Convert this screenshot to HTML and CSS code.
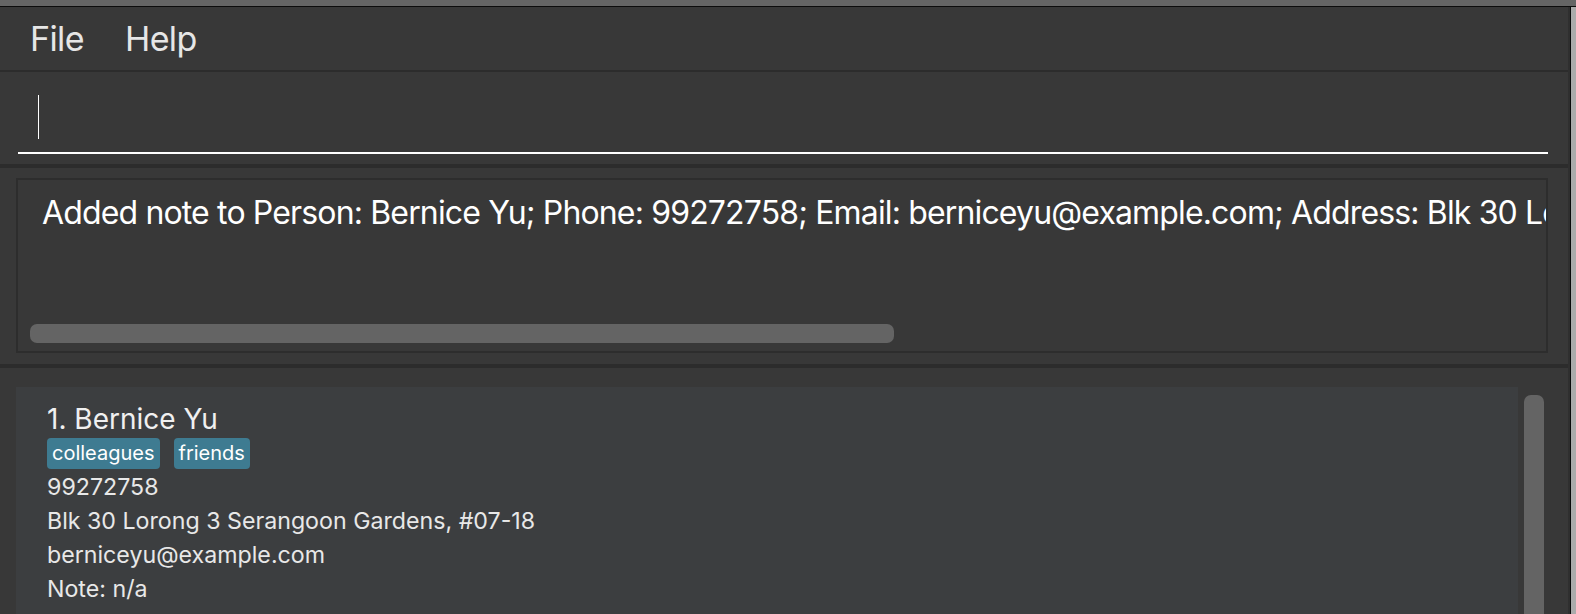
FILE: index.html
```html
<!DOCTYPE html>
<html lang="en">
<head>
<meta charset="utf-8">
<title>Address Book</title>
<link rel="stylesheet" href="styles.css">
</head>
<body>
<div class="topstrip"></div>
<div class="app">
  <div class="main">
    <nav class="menubar">
      <span class="menu-item">File</span>
      <span class="menu-item">Help</span>
    </nav>
    <div class="sep sep-thin"></div>
    <section class="command">
      <div class="field"><span class="caret"></span></div>
    </section>
    <div class="sep"></div>
    <section class="result">
      <div class="result-box">
        <p class="result-text">Added note to Person: Bernice Yu; Phone: 99272758; Email: berniceyu@example.com; Address: Blk 30 Lorong 3 Serangoon Gardens, #07-18; Tags: [colleagues][friends]; Note: n/a</p>
        <div class="hscroll"><div class="hthumb"></div></div>
      </div>
    </section>
    <div class="sep"></div>
    <section class="list">
      <div class="cards">
        <article class="card">
          <div class="name">1. Bernice Yu</div>
          <div class="tags"><span class="tag">colleagues</span><span class="tag">friends</span></div>
          <div class="line">99272758</div>
          <div class="line">Blk 30 Lorong 3 Serangoon Gardens, #07-18</div>
          <div class="line">berniceyu@example.com</div>
          <div class="line">Note: n/a</div>
        </article>
      </div>
      <div class="vscroll"><div class="vthumb"></div></div>
    </section>
  </div>
  <div class="edge"></div>
</div>
</body>
</html>
```

FILE: styles.css
```css
* { box-sizing: border-box; }
html, body { margin: 0; padding: 0; }
body {
  width: 1576px;
  height: 614px;
  overflow: hidden;
  background: #383838;
  font-family: "Inter", "Noto Sans", sans-serif;
  color: #e8e8e8;
}
.topstrip {
  height: 7px;
  background: #656565;
  border-bottom: 1px solid #0c0c0c;
}
.app {
  display: flex;
  height: 607px;
}
.main {
  width: 1568px;
  display: flex;
  flex-direction: column;
  background: #383838;
}
.edge {
  width: 8px;
  background: linear-gradient(to right, #2f2f2f 0 2px, #0a0a0a 2px 3px, #ababab 3px);
}
.menubar {
  height: 63px;
  display: flex;
  align-items: center;
  gap: 41px;
  padding-left: 30px;
  font-size: 34px;
  letter-spacing: -0.6px;
  line-height: 63px;
  color: #e6e6e6;
}
.sep { height: 4px; background: #2c2c2c; flex: none; }
.sep-thin { height: 2px; }
.command {
  height: 92px;
  padding: 0 20px 10px 18px;
  display: flex;
  align-items: flex-end;
}
.field {
  flex: 1;
  height: 72px;
  border-bottom: 2px solid #ffffff;
  display: flex;
  align-items: center;
  padding-left: 20px;
}
.caret {
  width: 1px;
  height: 44px;
  background: #ffffff;
}
.result {
  height: 196px;
  padding: 10px 20px 11px 16px;
}
.result-box {
  height: 175px;
  border: 2px solid #2d2d2d;
  position: relative;
  overflow: hidden;
  padding: 11px 0 0 24px;
}
.result-text {
  margin: 0;
  white-space: nowrap;
  font-size: 32px;
  letter-spacing: -0.85px;
  line-height: 44px;
  color: #ffffff;
}
.hscroll {
  position: absolute;
  left: 12px;
  right: 12px;
  bottom: 8px;
  height: 19px;
}
.hthumb {
  width: 864px;
  height: 19px;
  border-radius: 7px;
  background: #646464;
}
.list {
  flex: 1;
  display: flex;
  padding: 19px 0 0 16px;
  overflow: hidden;
}
.cards { width: 1502px; }
.card {
  background: #3c3e40;
  padding: 14px 0 20px 31px;
  height: 260px;
}
.name {
  font-size: 28px;
  line-height: 36px;
  color: #f0f0f0;
}
.tags {
  display: flex;
  gap: 14px;
  margin-top: 1px;
  margin-bottom: 1px;
}
.tag {
  height: 31px;
  line-height: 31px;
  padding: 0 5px;
  background: #3e7b91;
  border-radius: 4px;
  color: #ffffff;
  font-size: 20px;
}
.line {
  font-size: 23.2px;
  line-height: 34px;
  color: #e8e8e8;
}
.vscroll {
  width: 20px;
  margin-left: 6px;
  padding-top: 8px;
}
.vthumb {
  height: 300px;
  border-radius: 7px;
  background: #646464;
}
```
